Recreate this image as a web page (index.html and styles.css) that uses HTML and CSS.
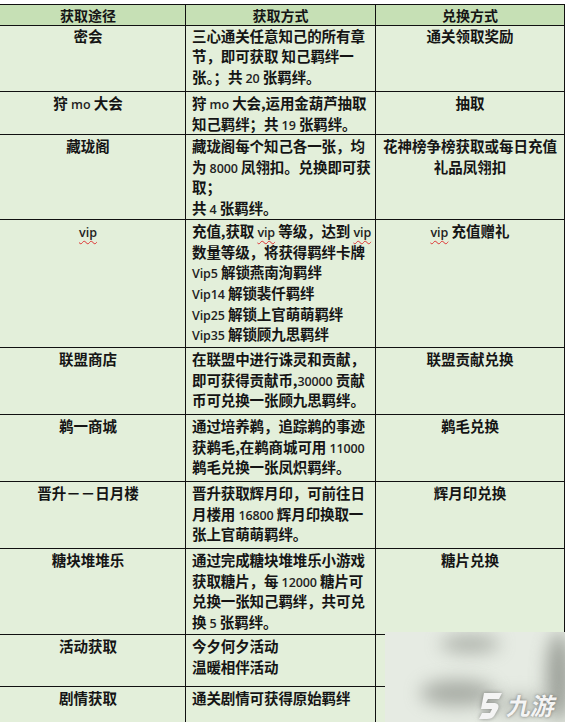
FILE: index.html
```html
<!DOCTYPE html>
<html lang="zh">
<head>
<meta charset="utf-8">
<link rel="stylesheet" href="styles.css">
</head>
<body>
<div class="page">
<table class="tbl">
  <colgroup><col class="c1"><col class="c2"><col class="c3"></colgroup>
  <tr class="head h21">
    <th>获取途径</th><th>获取方式</th><th>兑换方式</th>
  </tr>
  <tr class="h66 first">
    <td class="ctr">密会</td>
    <td><div class="txt">三心通关任意知己的所有章<br>节，即可获取 知己羁绊一<br>张。；共 <span class="num">20</span> 张羁绊。</div></td>
    <td class="ctr">通关领取奖励</td>
  </tr>
  <tr class="h43">
    <td class="ctr">狩 <span class="num">mo</span> 大会</td>
    <td><div class="txt">狩 <span class="num">mo</span> 大会,运用金葫芦抽取<br>知己羁绊；共 <span class="num">19</span> 张羁绊。</div></td>
    <td class="ctr">抽取</td>
  </tr>
  <tr class="h85">
    <td class="ctr">藏珑阁</td>
    <td><div class="txt">藏珑阁每个知己各一张，均<br>为 <span class="num">8000</span> 凤翎扣。兑换即可获<br>取；<br>共 <span class="num">4</span> 张羁绊。</div></td>
    <td class="ctr">花神榜争榜获取或每日充值<br>礼品凤翎扣</td>
  </tr>
  <tr class="h128">
    <td class="ctr"><span class="num wavy">vip</span></td>
    <td><div class="txt">充值,获取 <span class="num wavy">vip</span> 等级，达到 <span class="num wavy">vip</span><br>数量等级，将获得羁绊卡牌<br><span class="num">Vip5</span> 解锁燕南洵羁绊<br><span class="num">Vip14</span> 解锁裴仟羁绊<br><span class="num">Vip25</span> 解锁上官萌萌羁绊<br><span class="num">Vip35</span> 解锁顾九思羁绊</div></td>
    <td class="ctr"><span class="num wavy">vip</span> 充值赠礼</td>
  </tr>
  <tr class="h67">
    <td class="ctr">联盟商店</td>
    <td><div class="txt">在联盟中进行诛灵和贡献，<br>即可获得贡献币,<span class="num">30000</span> 贡献<br>币可兑换一张顾九思羁绊。</div></td>
    <td class="ctr">联盟贡献兑换</td>
  </tr>
  <tr class="h67">
    <td class="ctr">鹈一商城</td>
    <td><div class="txt">通过培养鹈，追踪鹈的事迹<br>获鹈毛,在鹈商城可用 <span class="num">11000</span><br>鹈毛兑换一张凤炽羁绊。</div></td>
    <td class="ctr">鹈毛兑换</td>
  </tr>
  <tr class="h67">
    <td class="ctr">晋升－－日月楼</td>
    <td><div class="txt">晋升获取辉月印，可前往日<br>月楼用 <span class="num">16800</span> 辉月印换取一<br>张上官萌萌羁绊。</div></td>
    <td class="ctr">辉月印兑换</td>
  </tr>
  <tr class="h86">
    <td class="ctr">糖块堆堆乐</td>
    <td><div class="txt">通过完成糖块堆堆乐小游戏<br>获取糖片，每 <span class="num">12000</span> 糖片可<br>兑换一张知己羁绊，共可兑<br>换 <span class="num">5</span> 张羁绊。</div></td>
    <td class="ctr">糖片兑换</td>
  </tr>
  <tr class="h52">
    <td class="ctr">活动获取</td>
    <td><div class="txt">今夕何夕活动<br>温暖相伴活动</div></td>
    <td></td>
  </tr>
  <tr class="h60">
    <td class="ctr">剧情获取</td>
    <td><div class="txt">通关剧情可获得原始羁绊</div></td>
    <td></td>
  </tr>
</table>
<div class="wm">
  <div class="blob b1"></div>
  <div class="blob b2"></div>
  <div class="blob b3"></div>
  <div class="blob b4"></div>
  <div class="logo">
    <svg class="mark" viewBox="0 0 30 30" width="30" height="30">
      <path d="M9 3 L27 3 L24 9 L13 9 L11 13 L20 13 Q25 14 23 19 L19 26 Q17 29 12 29 L4 29 L7 23 L15 23 L17 19 L6 19 Z" fill="#f4f4f4"/>
    </svg>
    <span class="logotext">九游</span>
  </div>
</div>
</div>
</body>
</html>
```
FILE: styles.css
```css
html, body {
  margin: 0;
  padding: 0;
  background: #ffffff;
}
.page {
  position: relative;
  width: 565px;
  height: 722px;
  overflow: hidden;
  padding-top: 4px;
  box-sizing: border-box;
}
.tbl {
  margin-left: -10px;
  width: 574px;
  table-layout: fixed;
  border-collapse: collapse;
  font-family: "Noto Sans CJK SC", sans-serif;
  font-weight: 700;
  font-size: 14.5px;
  color: #151515;
  background: #e3efda;
}
.c1 { width: 195px; }
.c2 { width: 190px; }
.c3 { width: 189px; }
.tbl th, .tbl td {
  border: 1px solid #111;
  vertical-align: top;
  padding: 1px 0 0 0;
  line-height: 20.6px;
}
.tbl th {
  background: #c6e0b5;
  text-align: center;
  padding: 0;
  font-size: 14px;
  line-height: 19px;
  vertical-align: middle;
}
.tbl td { padding-left: 6px; }
.tbl td.ctr { text-align: center; padding-left: 0; }
.first td { padding-top: 0; line-height: 20.4px; }
.txt { white-space: nowrap; letter-spacing: -0.1px; }
.num {
  font-family: "Open Sans", sans-serif;
  font-weight: 600;
  font-size: 12.5px;
  line-height: 1;
  color: #222;
}
.wavy {
  text-decoration: underline wavy #d33;
  text-decoration-thickness: 1px;
  text-underline-offset: 3px;
}
.h21 { height: 21px; }
.h66 { height: 66px; }
.h43 { height: 43px; }
.h85 { height: 85px; }
.h128 { height: 128px; }
.h67 { height: 67px; }
.h86 { height: 86px; }
.h52 { height: 52px; }
.h60 { height: 60px; }

.wm {
  position: absolute;
  left: 385px;
  top: 632px;
  width: 180px;
  height: 90px;
  background: #e6ebe3;
  overflow: hidden;
}
.blob {
  position: absolute;
  border-radius: 50%;
  background: #7f837c;
  filter: blur(9px);
}
.b1 { left: 55px; top: 4px; width: 60px; height: 16px; opacity: 0.6; }
.b2 { left: 35px; top: 48px; width: 75px; height: 26px; opacity: 0.6; }
.b3 { left: 162px; top: 0; width: 24px; height: 90px; opacity: 0.75; }
.b4 { left: 100px; top: 62px; width: 70px; height: 22px; opacity: 0.35; }
.logo {
  position: absolute;
  left: 90px;
  top: 55px;
  display: flex;
  align-items: center;
  gap: 3px;
}
.mark { filter: drop-shadow(0 0 2px rgba(80,80,80,0.6)); }
.logotext {
  font-family: "Noto Sans CJK SC", sans-serif;
  font-weight: 700;
  font-size: 24px;
  color: #f4f4f4;
  transform: skewX(-12deg);
  display: inline-block;
  text-shadow: 0 0 3px rgba(70,70,70,0.7);
}
```
